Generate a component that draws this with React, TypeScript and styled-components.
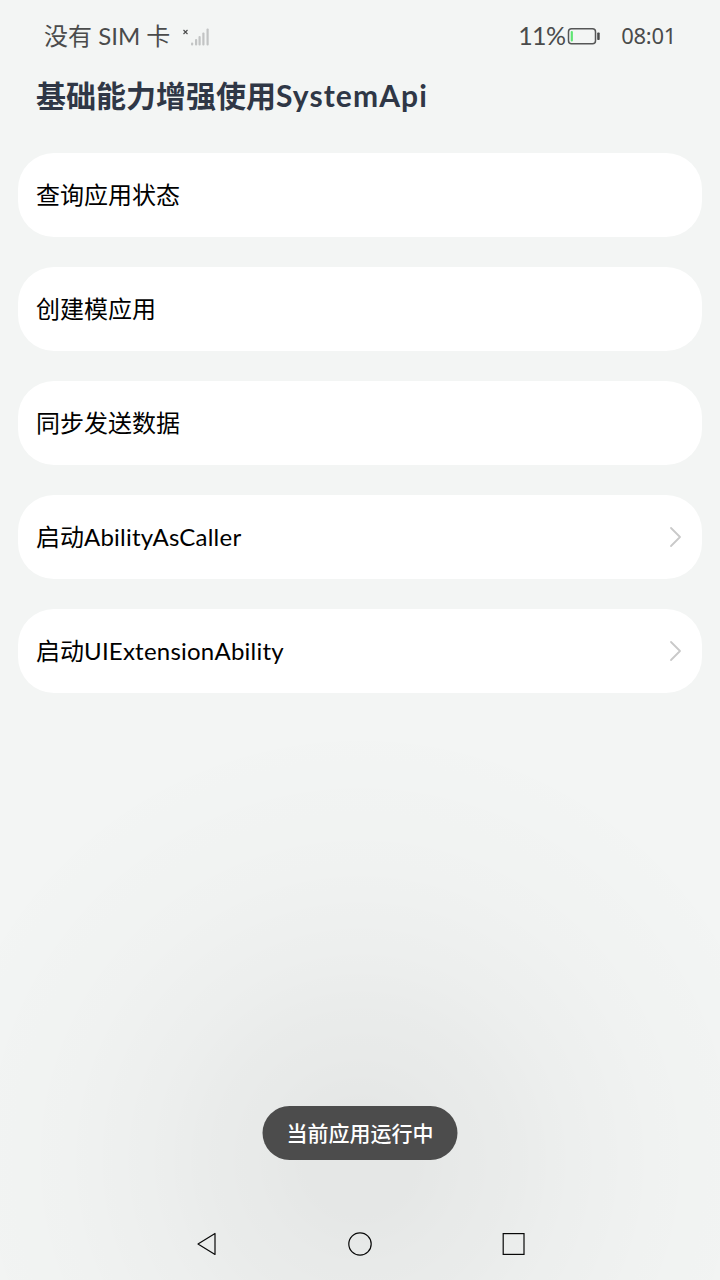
import React from 'react';
import styled, { createGlobalStyle } from 'styled-components';

const GlobalStyle = createGlobalStyle`
  * { box-sizing: border-box; }
  body { margin: 0; background: #f3f5f4; }
`;

const Screen = styled.div`
  position: relative;
  width: 720px;
  height: 1280px;
  overflow: hidden;
  display: flex;
  flex-direction: column;
  font-family: Lato, 'Noto Sans CJK SC', sans-serif;
  background:
    radial-gradient(circle 440px at 360px 1160px,
      rgba(0, 0, 0, 0.06) 0, rgba(0, 0, 0, 0.057) 50px, rgba(0, 0, 0, 0.049) 100px,
      rgba(0, 0, 0, 0.039) 150px, rgba(0, 0, 0, 0.028) 200px, rgba(0, 0, 0, 0.019) 250px,
      rgba(0, 0, 0, 0.011) 300px, rgba(0, 0, 0, 0.006) 350px, rgba(0, 0, 0, 0.002) 400px,
      rgba(0, 0, 0, 0) 440px),
    #f3f5f4;
`;

const StatusBar = styled.header`
  display: flex;
  align-items: center;
  height: 72px;
  padding: 0 44px;
  color: #4a4b4b;
  white-space: nowrap;
`;

const Carrier = styled.span`
  font-size: 24px;
  line-height: 36px;
  width: 138px;
`;

const Signal = styled.svg`
  width: 28px;
  height: 24px;
  margin-right: auto;
`;

const BatteryLevel = styled.span`
  font-family: Lato, sans-serif;
  font-size: 25px;
  line-height: 34px;
  letter-spacing: -0.7px;
  padding-bottom: 2px;
`;

const Battery = styled.svg`
  width: 34px;
  height: 20px;
  margin: 0 20px 0 2px;
`;

const Clock = styled.span`
  font-family: 'Noto Sans', sans-serif;
  font-size: 22px;
  line-height: 34px;
  letter-spacing: -0.3px;
  padding-bottom: 2px;
`;

const Latin = styled.span<{ $spacing: number }>`
  letter-spacing: ${(p) => p.$spacing}px;
`;

const Title = styled.h1`
  margin: 0;
  padding-left: 36px;
  height: 81px;
  line-height: 47px;
  font-size: 30px;
  font-weight: 700;
  color: #2f3746;
  white-space: nowrap;
`;

const List = styled.main`
  display: flex;
  flex-direction: column;
  gap: 30px;
  padding: 0 18px;
  flex: 1;
`;

const Row = styled.button`
  display: flex;
  align-items: center;
  justify-content: space-between;
  height: 84px;
  padding: 0 18px;
  border: 0;
  border-radius: 36px;
  background: #fff;
  color: #000;
  font-family: inherit;
  font-size: 24px;
  line-height: 36px;
  text-align: left;
`;

const Chevron = styled.svg`
  width: 18px;
  height: 24px;
`;

const Toast = styled.div`
  position: absolute;
  left: 50%;
  bottom: 120px;
  transform: translateX(-50%);
  display: flex;
  align-items: center;
  justify-content: center;
  width: 195px;
  height: 54px;
  padding-bottom: 3px;
  border-radius: 27px;
  background: #4c4c4c;
  color: #fff;
  font-size: 21px;
  font-weight: 500;
  white-space: nowrap;
`;

const NavBar = styled.nav`
  display: flex;
  justify-content: center;
  align-items: center;
  gap: 122px;
  height: 72px;
`;

const NavIcon = styled.svg`
  width: 32px;
  height: 32px;
  fill: none;
  stroke: #080808;
  stroke-width: 1.2;
`;

type Item = { text: string; latin?: string };

const items: Item[] = [
  { text: '查询应用状态' },
  { text: '创建模应用' },
  { text: '同步发送数据' },
  { text: '启动', latin: 'AbilityAsCaller' },
  { text: '启动', latin: 'UIExtensionAbility' },
];

export default function App() {
  return (
    <Screen>
      <GlobalStyle />
      <StatusBar>
        <Carrier>没有 SIM 卡</Carrier>
        <Signal viewBox="0 0 28 24">
          <path d="M1.5 6l4 4M5.5 6l-4 4" stroke="#4a4b4b" strokeWidth="1.1" />
          <g fill="#c2c4c4">
            <rect x="9" y="18.5" width="2.2" height="3" rx="1" />
            <rect x="13" y="15" width="2.2" height="6.500" rx="1" />
            <rect x="16.5" y="12" width="2.2" height="9.500" rx="1" />
            <rect x="20.3" y="8.5" width="2.2" height="13" rx="1" />
            <rect x="24.5" y="4.5" width="2.2" height="17" rx="1" />
          </g>
        </Signal>
        <BatteryLevel>11%</BatteryLevel>
        <Battery viewBox="0 0 34 20">
          <rect x="1.5" y="2.8" width="27" height="15" rx="3" fill="none" stroke="#555656" strokeWidth="1.5" />
          <rect x="3.7" y="5" width="2.2" height="10.5" rx="1" fill="#5fe573" />
          <rect x="30.2" y="6.5" width="2.5" height="7.5" rx="0.8" fill="#4a4b4b" />
        </Battery>
        <Clock>08:01</Clock>
      </StatusBar>
      <Title>
        基础能力增强使用<Latin $spacing={1.1}>SystemApi</Latin>
      </Title>
      <List>
        {items.map((item) => (
          <Row key={item.text + (item.latin ?? '')}>
            <span>
              {item.text}
              {item.latin && <Latin $spacing={0.23}>{item.latin}</Latin>}
            </span>
            {item.latin && (
              <Chevron viewBox="0 0 18 24" fill="none" stroke="#c9c9c9" strokeWidth="1.8" strokeLinecap="round" strokeLinejoin="round">
                <path d="M5 3l9 9l-9 9" />
              </Chevron>
            )}
          </Row>
        ))}
      </List>
      <NavBar>
        <NavIcon viewBox="0 0 32 32">
          <path d="M25 5.5V26.5L8 16Z" strokeLinejoin="round" />
        </NavIcon>
        <NavIcon viewBox="0 0 32 32">
          <circle cx="16" cy="16" r="11.2" />
        </NavIcon>
        <NavIcon viewBox="0 0 32 32">
          <rect x="5.2" y="5.6" width="20.800" height="20.800" />
        </NavIcon>
      </NavBar>
      <Toast>当前应用运行中</Toast>
    </Screen>
  );
}
